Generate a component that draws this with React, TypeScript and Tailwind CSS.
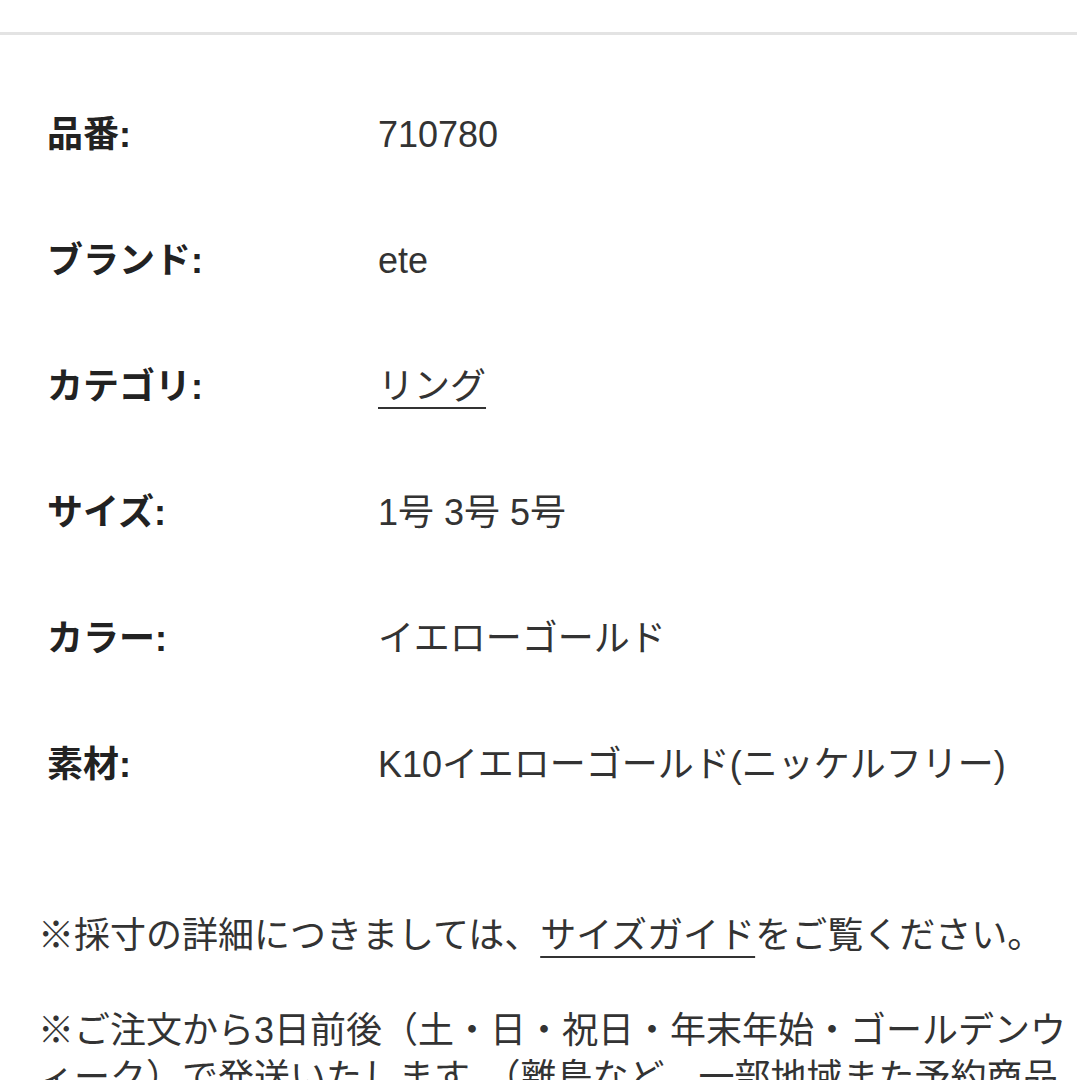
export default function App() {
  const rows: { label: string; value: string; link?: boolean }[] = [
    { label: "品番:", value: "710780" },
    { label: "ブランド:", value: "ete" },
    { label: "カテゴリ:", value: "リング", link: true },
    { label: "サイズ:", value: "1号 3号 5号" },
    { label: "カラー:", value: "イエローゴールド" },
    { label: "素材:", value: "K10イエローゴールド(ニッケルフリー)" },
  ]

  return (
    <main
      className="h-[1080px] w-[1077px] overflow-hidden bg-white text-[#222]"
      style={{ fontFamily: '"Liberation Sans", "Noto Sans CJK JP", sans-serif' }}
    >
      <div className="pt-[32px]">
        <div className="h-[3px] bg-[#e3e3e3]" />
      </div>

      <div className="pt-[37px] pl-[47px]">
        {rows.map(r => (
          <div key={r.label} className="flex items-center h-[126px]">
            <div className="w-[331px] shrink-0 text-[36px] font-bold text-[#222]">{r.label}</div>
            <div className="text-[36px] text-[#333] whitespace-nowrap">
              {r.link ? (
                <span className="underline decoration-[2px] underline-offset-[8px]">{r.value}</span>
              ) : (
                r.value
              )}
            </div>
          </div>
        ))}
      </div>

      <div className="pl-[38px] pt-[84px] text-[36px] leading-[47px] text-[#333]">
        <p>
          ※採寸の詳細につきましては、
          <span className="underline decoration-[2px] underline-offset-[8px]">サイズガイド</span>
          をご覧ください。
        </p>
        <p className="mt-[48px]">
          ※ご注文から3日前後（土・日・祝日・年末年始・ゴールデンウィーク）で発送いたします。（離島など、一部地域また予約商品を除く）
        </p>
      </div>
    </main>
  )
}
